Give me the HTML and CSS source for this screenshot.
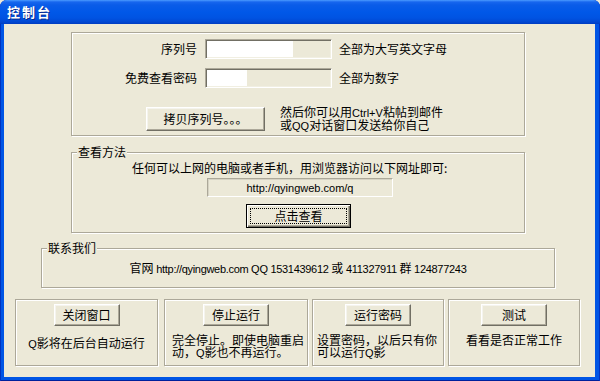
FILE: index.html
```html
<!DOCTYPE html>
<html lang="zh-CN">
<head>
    <meta charset="UTF-8">
    <title>控制台</title>
    <link rel="stylesheet" href="styles.css">
</head>
<body>
    <div class="window">
        <div class="titlebar">
            <span class="title">控制台</span>
        </div>
        <div class="client">
            <div class="group group-top">
                <div class="row">
                    <span class="label">序列号</span>
                    <input type="text" class="edit fill-wide">
                    <span class="hint">全部为大写英文字母</span>
                </div>
                <div class="row row-second">
                    <span class="label">免费查看密码</span>
                    <input type="text" class="edit fill-short">
                    <span class="hint">全部为数字</span>
                </div>
                <div class="row row-copy">
                    <button class="btn btn-copy">拷贝序列号。。。</button>
                    <p class="copy-note">然后你可以用<span class="en">Ctrl+V</span>粘帖到邮件<br>或<span class="en">QQ</span>对话窗口发送给你自己</p>
                </div>
            </div>

            <fieldset class="group group-view">
                <legend>查看方法</legend>
                <p class="view-text">任何可以上网的电脑或者手机，用浏览器访问以下网址即可:</p>
                <div class="url-box"><span class="en">http://qyingweb.com/q</span></div>
                <button class="btn btn-default"><span class="focus">点击查看</span></button>
            </fieldset>

            <fieldset class="group group-contact">
                <legend>联系我们</legend>
                <p class="contact-text">官网 <span class="en">http://qyingweb.com QQ 1531439612</span> 或 <span class="en">411327911</span> 群 <span class="en">124877243</span></p>
            </fieldset>

            <div class="actions">
                <div class="group action action-close">
                    <button class="btn btn-small">关闭窗口</button>
                    <p class="action-text text-center text-low"><span class="en">Q</span>影将在后台自动运行</p>
                </div>
                <div class="group action action-stop">
                    <button class="btn btn-small">停止运行</button>
                    <p class="action-text">完全停止。即使电脑重启<br>动，<span class="en">Q</span>影也不再运行。</p>
                </div>
                <div class="group action action-pass">
                    <button class="btn btn-small">运行密码</button>
                    <p class="action-text">设置密码，以后只有你<br>可以运行<span class="en">Q</span>影</p>
                </div>
                <div class="group action action-test">
                    <button class="btn btn-small">测试</button>
                    <p class="action-text text-center">看看是否正常工作</p>
                </div>
            </div>
        </div>
    </div>
</body>
</html>
```

FILE: styles.css
```css
body {
    margin: 0;
    font-family: "Noto Sans CJK SC", sans-serif;
    font-size: 12px;
    line-height: 12px;
    color: #000;
    background: #ece9d8;
}
p {
    margin: 0;
}
.en {
    font-family: "Liberation Sans", Arial, sans-serif;
    font-size: 11px;
}

/* window frame */
.window {
    width: 600px;
    height: 381px;
    display: flex;
    flex-direction: column;
    background: #0055e5;
    border-radius: 7px 7px 0 0;
    box-shadow: inset 1px 0 #0032c0, inset -1px 0 #0032c0, inset 0 -1px #00209c;
    overflow: hidden;
}
.titlebar {
    height: 24px;
    flex: none;
    display: flex;
    align-items: center;
    padding-left: 7px;
    background: linear-gradient(#4a9bff 0, #1766ee 2px, #0a5ce8 5px, #0058e8 12px, #0053e2 18px, #0047d2 22px, #003cc0 24px);
}
.title {
    color: #fff;
    font-size: 13px;
    font-weight: bold;
    letter-spacing: 2px;
    line-height: 14px;
    text-shadow: 1px 1px 0 #0a2a8c;
}
.client {
    flex: 1;
    margin: 0 5px 4px 4px;
    background: #ece9d8;
}

/* group boxes */
.group {
    box-sizing: border-box;
    border: 1px solid #aca899;
    box-shadow: inset 1px 1px 0 #fff, 1px 1px 0 #fff;
    margin: 0;
    min-inline-size: 0;
}
legend {
    margin-left: 5px;
    padding: 0 1px;
    line-height: 14px;
    background: #ece9d8;
}

.group-top {
    width: 454px;
    height: 104px;
    margin: 8px 0 0 67px;
    padding: 6px 0 0;
}
.row {
    display: flex;
    align-items: center;
}
.row-second {
    margin-top: 9px;
}
.row-copy {
    margin-top: 18px;
}
.label {
    width: 125px;
    text-align: right;
}
.edit {
    box-sizing: border-box;
    width: 127px;
    height: 20px;
    margin: 0 0 0 8px;
    padding: 0;
    border: 1px solid;
    border-color: #aca899 #fff #fff #aca899;
    box-shadow: inset 1px 1px 0 #716f64, inset -1px -1px 0 #f1efe2;
    outline: none;
}
.fill-wide {
    background: linear-gradient(to right, #fff 87px, #ece9d8 87px);
}
.fill-short {
    background: linear-gradient(to right, #fff 41px, #ece9d8 41px);
}
.hint {
    margin-left: 7px;
}

/* buttons */
.btn {
    box-sizing: border-box;
    font-family: "Noto Sans CJK SC", sans-serif;
    font-size: 12px;
    line-height: 12px;
    color: #000;
    background: #ece9d8;
    border: 1px solid;
    border-color: #fff #716f64 #716f64 #fff;
    box-shadow: inset -1px -1px 0 #aca899, inset 1px 1px 0 #f5f4ee;
    padding: 0;
    cursor: pointer;
}
.btn-copy {
    width: 119px;
    height: 24px;
    margin-left: 74px;
}
.copy-note {
    margin-left: 15px;
    line-height: 12px;
}

.group-view {
    width: 454px;
    margin: 9px 0 0 67px;
    padding: 2px 0 4px;
}
.view-text {
    padding-left: 60px;
    line-height: 14px;
}
.url-box {
    box-sizing: border-box;
    width: 186px;
    height: 19px;
    margin: 3px 0 0 135px;
    border: 1px solid;
    border-color: #aca899 #fff #fff #aca899;
    box-shadow: inset 1px 1px 0 #d6d3c4;
    display: flex;
    align-items: center;
    justify-content: center;
}
.btn-default {
    display: flex;
    width: 105px;
    height: 24px;
    margin: 7px 0 0 174px;
    padding: 3px;
    border: 1px solid #000;
    box-shadow: inset 1px 1px 0 #fff, inset -1px -1px 0 #716f64, inset -2px -2px 0 #aca899;
}
.focus {
    flex: 1;
    display: flex;
    align-items: center;
    justify-content: center;
    border: 1px dotted #000;
}

.group-contact {
    width: 514px;
    margin: 8px 0 0 37px;
    padding: 6px 0 11px;
}
.contact-text {
    text-align: center;
    line-height: 14px;
}
.contact-text .en {
    letter-spacing: -0.3px;
}

/* bottom action boxes */
.actions {
    display: flex;
    margin: 11px 0 0 11px;
}
.action {
    height: 67px;
    display: flex;
    flex-direction: column;
    align-items: center;
    padding-top: 4px;
}
.action-close { width: 143px; }
.action-stop { width: 144px; margin-left: 6px; }
.action-pass { width: 132px; margin-left: 4px; }
.action-test { width: 132px; margin-left: 4px; }
.btn-small {
    width: 66px;
    height: 22px;
}
.action-text {
    align-self: stretch;
    margin-top: 8px;
    line-height: 12px;
}
.action-stop .action-text { padding-left: 7px; }
.action-pass .action-text { padding-left: 4px; }
.text-center {
    text-align: center;
}
.text-low {
    margin-top: 11px;
}
```
